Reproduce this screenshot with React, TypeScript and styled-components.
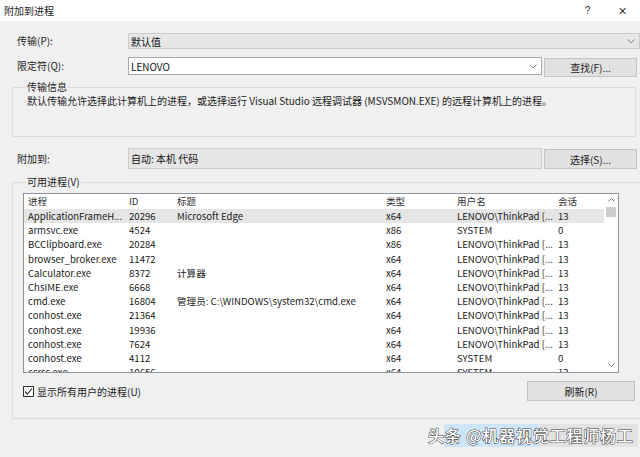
import React from 'react';
import styled, { createGlobalStyle } from 'styled-components';

const GlobalStyle = createGlobalStyle`
  html, body {
    margin: 0;
    padding: 0;
    background: #f0f0f0;
  }
  body {
    font-family: "Noto Sans CJK SC", "Noto Sans", sans-serif;
    font-size: 10px;
    color: #1a1a1a;
  }
`;

const Dialog = styled.div`
  position: relative;
  width: 640px;
  height: 457px;
  overflow: hidden;
  background: #f0f0f0;
`;

const TitleBar = styled.div`
  display: flex;
  align-items: center;
  height: 21px;
  background: #ffffff;
  padding-left: 4px;
`;

const Title = styled.span`
  flex: 1;
  font-size: 10px;
  color: #222;
`;

const TitleButton = styled.span<{ $big?: boolean }>`
  width: 35px;
  text-align: center;
  font-size: ${(p) => (p.$big ? '14px' : '10px')};
  color: #333;
  font-family: "Liberation Sans", sans-serif;
`;

const Body = styled.div`
  padding: 12px 0 0 12px;
  display: flex;
  flex-direction: column;
`;

const FormRow = styled.div<{ $mt?: number }>`
  display: grid;
  grid-template-columns: 109px 414px 93px;
  column-gap: 2px;
  align-items: start;
  padding-left: 5px;
  margin-top: ${(p) => p.$mt ?? 0}px;
`;

const Label = styled.label<{ $h: number }>`
  line-height: ${(p) => p.$h}px;
  color: #222;
`;

const Combo = styled.div<{ $disabled?: boolean; $wide?: boolean; $h: number }>`
  display: flex;
  align-items: center;
  justify-content: space-between;
  box-sizing: border-box;
  height: ${(p) => p.$h}px;
  width: ${(p) => (p.$wide ? '512px' : 'auto')};
  grid-column: ${(p) => (p.$wide ? '2 / 4' : 'auto')};
  padding: 0 4px 0 2px;
  background: ${(p) => (p.$disabled ? '#e6e6e6' : '#ffffff')};
  border: 1px solid ${(p) => (p.$disabled ? '#cccccc' : '#a9a9a9')};
  color: #111;
`;

const Chevron = styled.svg`
  width: 8px;
  height: 5px;
  flex: none;
`;

const Button = styled.button<{ $h?: number; $mt?: number; $w?: number }>`
  box-sizing: border-box;
  height: ${(p) => p.$h ?? 20}px;
  width: ${(p) => (p.$w ? `${p.$w}px` : 'auto')};
  margin-top: ${(p) => p.$mt ?? 0}px;
  padding: 0;
  background: #e1e1e1;
  border: 1px solid #c3c3c3;
  font-family: inherit;
  font-size: 10px;
  color: #222;
`;

const Group = styled.fieldset<{ $mt: number; $pb: number }>`
  margin: ${(p) => p.$mt}px 0 0 0;
  width: 624px;
  box-sizing: border-box;
  padding: 0 16px ${(p) => p.$pb}px 10px;
  border: 1px solid #dcdcdc;
  border-radius: 0;
`;

const Legend = styled.legend`
  padding: 0 1px;
  margin-left: 3px;
  line-height: 12px;
  color: #222;
`;

const InfoText = styled.div`
  height: 43px;
  padding: 2px 0 0 4px;
  box-sizing: border-box;
  line-height: 12px;
  color: #222;
`;

const ListBox = styled.div`
  margin-top: 5px;
  display: flex;
  box-sizing: border-box;
  width: 596px;
  height: 180px;
  border: 1px solid #8f959c;
  background: #ffffff;
  overflow: hidden;
`;

const Rows = styled.div`
  flex: 1;
  overflow: hidden;
`;

const Row = styled.div<{ $header?: boolean; $selected?: boolean }>`
  display: grid;
  grid-template-columns: 101px 48px 209px 71px 101px 1fr;
  padding-left: 4px;
  height: ${(p) => (p.$header ? '15px' : '14.2px')};
  line-height: ${(p) => (p.$header ? '15px' : '14.2px')};
  background: ${(p) => (p.$selected ? '#e5e5e5' : 'transparent')};
  color: ${(p) => (p.$header ? '#333' : '#1a1a1a')};
  font-size: 9.6px;
  white-space: nowrap;
`;

const Cell = styled.span`
  overflow: hidden;
`;

const ScrollBar = styled.div`
  width: 14px;
  flex: none;
  display: flex;
  flex-direction: column;
  align-items: center;
  background: #ffffff;
`;

const ScrollArrow = styled.svg`
  width: 7px;
  height: 4px;
  margin: 4px 0 5px;
`;

const Thumb = styled.div`
  width: 10px;
  height: 10px;
  background: #cdcdcd;
`;

const Spacer = styled.div`
  flex: 1;
`;

const BottomRow = styled.div`
  display: flex;
  align-items: center;
  justify-content: space-between;
  margin-top: 8px;
  width: 612px;
`;

const CheckLabel = styled.label`
  display: flex;
  align-items: center;
  gap: 3px;
  color: #222;
`;

const CheckBox = styled.span`
  display: inline-flex;
  align-items: center;
  justify-content: center;
  box-sizing: border-box;
  width: 11px;
  height: 11px;
  border: 1px solid #333;
  background: #fff;
`;

const Watermark = styled.div`
  position: absolute;
  left: 428px;
  top: 424px;
  width: 210px;
  height: 23px;
  line-height: 23px;
  background: linear-gradient(
    to right,
    transparent 16px,
    #cfe6fa 16px,
    #cfe6fa 110px,
    #e2e2e2 110px
  );
  font-family: "Noto Sans CJK SC", sans-serif;
  font-size: 16px;
  letter-spacing: 0.8px;
  font-weight: 500;
  color: #ffffff;
  -webkit-text-stroke: 1px #3a3a3a;
  paint-order: stroke fill;
  white-space: nowrap;
`;

const ChevronDown = () => (
  <Chevron viewBox="0 0 8 5">
    <path d="M0.5 0.5 L4 4 L7.5 0.5" fill="none" stroke="#8a8a8a" strokeWidth="1" />
  </Chevron>
);

const processes = [
  ['ApplicationFrameH...', '20296', 'Microsoft Edge', 'x64', 'LENOVO\\ThinkPad [...', '13'],
  ['armsvc.exe', '4524', '', 'x86', 'SYSTEM', '0'],
  ['BCClipboard.exe', '20284', '', 'x86', 'LENOVO\\ThinkPad [...', '13'],
  ['browser_broker.exe', '11472', '', 'x64', 'LENOVO\\ThinkPad [...', '13'],
  ['Calculator.exe', '8372', '计算器', 'x64', 'LENOVO\\ThinkPad [...', '13'],
  ['ChsIME.exe', '6668', '', 'x64', 'LENOVO\\ThinkPad [...', '13'],
  ['cmd.exe', '16804', '管理员: C:\\WINDOWS\\system32\\cmd.exe', 'x64', 'LENOVO\\ThinkPad [...', '13'],
  ['conhost.exe', '21364', '', 'x64', 'LENOVO\\ThinkPad [...', '13'],
  ['conhost.exe', '19936', '', 'x64', 'LENOVO\\ThinkPad [...', '13'],
  ['conhost.exe', '7624', '', 'x64', 'LENOVO\\ThinkPad [...', '13'],
  ['conhost.exe', '4112', '', 'x64', 'SYSTEM', '0'],
  ['csrss.exe', '10656', '', 'x64', 'SYSTEM', '13'],
];

const App: React.FC = () => {
  return (
    <Dialog>
      <GlobalStyle />
      <TitleBar>
        <Title>附加到进程</Title>
        <TitleButton>?</TitleButton>
        <TitleButton $big>×</TitleButton>
      </TitleBar>
      <Body>
        <FormRow>
          <Label $h={16}>传输(P):</Label>
          <Combo $disabled $wide $h={16}>
            <span>默认值</span>
            <ChevronDown />
          </Combo>
        </FormRow>
        <FormRow $mt={8}>
          <Label $h={18}>限定符(Q):</Label>
          <Combo $h={18}>
            <span>LENOVO</span>
            <ChevronDown />
          </Combo>
          <Button $h={19} $mt={1}>查找(F)...</Button>
        </FormRow>
        <Group $mt={4} $pb={0}>
          <Legend>传输信息</Legend>
          <InfoText>
            默认传输允许选择此计算机上的进程，或选择运行 Visual Studio 远程调试器 (MSVSMON.EXE) 的远程计算机上的进程。
          </InfoText>
        </Group>
        <FormRow $mt={11}>
          <Label $h={21}>附加到:</Label>
          <Combo $disabled $h={21}>
            <span>自动: 本机 代码</span>
          </Combo>
          <Button $h={20} $mt={1}>选择(S)...</Button>
        </FormRow>
        <Group $mt={7} $pb={17}>
          <Legend>可用进程(V)</Legend>
          <ListBox>
            <Rows>
              <Row $header>
                <Cell>进程</Cell>
                <Cell>ID</Cell>
                <Cell>标题</Cell>
                <Cell>类型</Cell>
                <Cell>用户名</Cell>
                <Cell>会话</Cell>
              </Row>
              {processes.map((p, i) => (
                <Row key={i} $selected={i === 0}>
                  {p.map((c, j) => (
                    <Cell key={j}>{c}</Cell>
                  ))}
                </Row>
              ))}
            </Rows>
            <ScrollBar>
              <ScrollArrow viewBox="0 0 7 4">
                <path d="M0.5 3.5 L3.5 0.5 L6.5 3.5" fill="none" stroke="#7a7a7a" />
              </ScrollArrow>
              <Thumb />
              <Spacer />
              <ScrollArrow viewBox="0 0 7 4">
                <path d="M0.5 0.5 L3.5 3.5 L6.5 0.5" fill="none" stroke="#7a7a7a" />
              </ScrollArrow>
            </ScrollBar>
          </ListBox>
          <BottomRow>
            <CheckLabel>
              <CheckBox>
                <svg width="9" height="9" viewBox="0 0 9 9">
                  <path d="M1 4.5 L3.5 7 L8 1.5" fill="none" stroke="#222" strokeWidth="1.1" />
                </svg>
              </CheckBox>
              显示所有用户的进程(U)
            </CheckLabel>
            <Button $w={108} $h={20}>刷新(R)</Button>
          </BottomRow>
        </Group>
      </Body>
      <Watermark>头条 @机器视觉工程师杨工</Watermark>
    </Dialog>
  );
};

export default App;
